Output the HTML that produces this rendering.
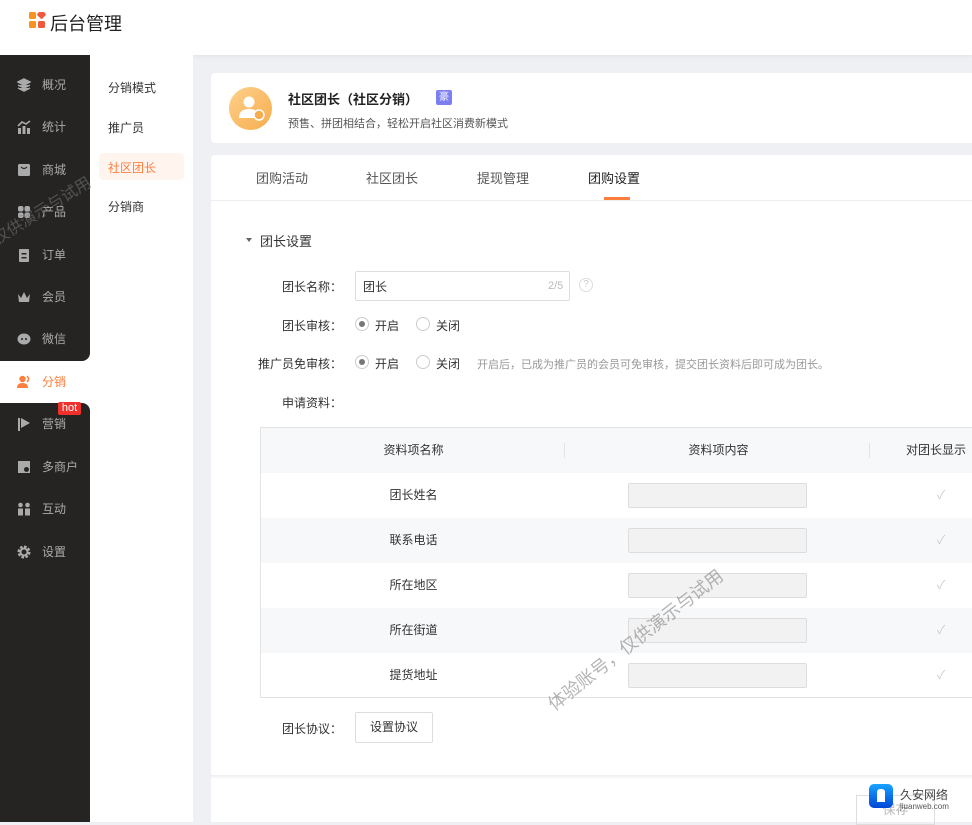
<!DOCTYPE html>
<html><head><meta charset="utf-8">
<style>
*{margin:0;padding:0;box-sizing:border-box}
body{width:972px;height:822px;overflow:hidden;background:#eef0f4;font-family:"Liberation Sans","Noto Sans CJK SC",sans-serif;font-size:12px;color:#333;position:relative}
.abs{position:absolute}
.header{left:0;top:0;width:972px;height:55px;background:#fff;box-shadow:0 1px 4px rgba(0,0,0,.06)}
.side{left:0;top:55px;width:90px;height:767px;background:#252423}
.sub{left:90px;top:55px;width:103px;height:767px;background:#fff}
.si{position:absolute;left:0;width:90px;height:20px;color:#aaa;font-size:12px;line-height:20px}
.si span{position:absolute;left:42px}
.si svg{position:absolute;left:17px;top:3px}
.mi{position:absolute;left:108px;font-size:12px;color:#333}
.card{background:#fff;border-radius:4px}
.tab{position:absolute;top:168px;font-size:13px;color:#555}
.lab{position:absolute;font-size:12px;color:#333;text-align:right;width:100px;white-space:nowrap}
.radio{position:absolute;width:14px;height:14px;border:1px solid #ccc;border-radius:50%;background:#fff}
.radio.on::after{content:"";position:absolute;left:3px;top:3px;width:6px;height:6px;border-radius:50%;background:#777}
.rt{position:absolute;font-size:12px;color:#333;white-space:nowrap}
.row{position:absolute;left:261px;width:711px;height:45px}
.row .n{position:absolute;left:0;width:305px;text-align:center;line-height:45px;font-size:12px;color:#333}
.row .in{position:absolute;left:367px;top:10px;width:179px;height:25px;background:#f2f2f2;border:1px solid #ddd;border-radius:2px}
.row .ck{position:absolute;left:670px;top:13px;color:#ccc;font-size:12px}
.wm{position:absolute;color:rgba(120,120,120,.55);font-size:18px;white-space:nowrap;transform-origin:left bottom}
</style></head><body>
<div class="abs header">
  <svg class="abs" style="left:29px;top:12px" width="17" height="17" viewBox="0 0 17 17"><rect x="0" y="0" width="7" height="7" rx="1.5" fill="#f7931e"/><rect x="9" y="-1" width="7" height="7" rx="1.5" fill="#f05a3c" transform="rotate(45 12.5 2.5)"/><rect x="0" y="9" width="7" height="7" rx="1.5" fill="#f7931e"/><rect x="9" y="9" width="7" height="7" rx="1.5" fill="#f05a3c"/></svg>
  <div class="abs" style="left:50px;top:10px;font-size:18px;color:#222">后台管理</div>
</div>
<div class="abs side"></div>
<div class="abs" style="left:0;top:361px;width:90px;height:42px;background:#fff"></div>
<div class="abs" style="left:80px;top:350px;width:10px;height:11px;background:#fff"></div>
<div class="abs" style="left:80px;top:350px;width:10px;height:11px;background:#252423;border-bottom-right-radius:8px"></div>
<div class="abs" style="left:80px;top:403px;width:10px;height:10px;background:#fff"></div>
<div class="abs" style="left:80px;top:403px;width:10px;height:10px;background:#252423;border-top-right-radius:8px"></div>
<div class="abs sub"></div>

<div class="si" style="top:75px"><svg width="14" height="14"><path d="M7 1L13 4L7 7L1 4Z M1 7L7 10L13 7 M1 10L7 13L13 10" fill="#aaa" stroke="#aaa" stroke-width="1.5"/></svg><span>概况</span></div>
<div class="si" style="top:117px"><svg width="14" height="14"><rect x="1" y="8" width="3" height="6" fill="#aaa"/><rect x="5.5" y="6" width="3" height="8" fill="#aaa"/><rect x="10" y="8" width="3" height="6" fill="#aaa"/><path d="M1 6L5 2L9 4L13 1" stroke="#aaa" stroke-width="1.6" fill="none"/></svg><span>统计</span></div>
<div class="si" style="top:160px"><svg width="14" height="14"><rect x="1" y="1" width="12" height="12" rx="1.5" fill="#aaa"/><path d="M4 4Q7 7 10 4" stroke="#252423" stroke-width="1.2" fill="none"/></svg><span>商城</span></div>
<div class="si" style="top:202px"><svg width="14" height="14"><rect x="1" y="1" width="5.5" height="5.5" rx="2" fill="#aaa"/><rect x="7.5" y="1" width="5.5" height="5.5" rx="2" fill="#aaa"/><rect x="1" y="7.5" width="5.5" height="5.5" rx="2" fill="#aaa"/><rect x="7.5" y="7.5" width="5.5" height="5.5" rx="2" fill="#aaa"/></svg><span>产品</span></div>
<div class="si" style="top:245px"><svg width="14" height="14"><rect x="2" y="1" width="10" height="13" rx="1" fill="#aaa"/><rect x="4.5" y="5" width="5" height="1.5" fill="#252423"/><rect x="4.5" y="9" width="5" height="1.5" fill="#252423"/></svg><span>订单</span></div>
<div class="si" style="top:287px"><svg width="14" height="14"><path d="M1 4L4 8L7 2L10 8L13 4L12 12H2Z" fill="#aaa"/></svg><span>会员</span></div>
<div class="si" style="top:329px"><svg width="14" height="14"><ellipse cx="7" cy="7" rx="6.5" ry="5.5" fill="#aaa"/><circle cx="5" cy="7" r="1" fill="#252423"/><circle cx="9" cy="7" r="1" fill="#252423"/></svg><span>微信</span></div>
<div class="si" style="top:372px;color:#ff7e3d"><svg width="14" height="14"><circle cx="5.5" cy="4" r="3.2" fill="#ff7e3d"/><path d="M0 13Q0 8 5.5 8Q11 8 11 13Z" fill="#ff7e3d"/><path d="M10 1Q13 4 10 7" stroke="#ff7e3d" stroke-width="1.5" fill="none"/></svg><span>分销</span></div>
<div class="abs" style="left:58px;top:402px;width:23px;height:13px;background:#f0302a;color:#fff;font-size:11px;line-height:13px;text-align:center;border-radius:2px">hot</div>
<div class="si" style="top:414px"><svg width="14" height="14"><rect x="1" y="1" width="2" height="13" fill="#aaa"/><path d="M4 1L13 6L4 11Z" fill="#aaa"/></svg><span>营销</span></div>
<div class="si" style="top:457px"><svg width="14" height="14"><rect x="1" y="1" width="12" height="12" fill="#aaa"/><circle cx="9.5" cy="9.5" r="3" fill="#252423" stroke="#aaa"/></svg><span>多商户</span></div>
<div class="si" style="top:499px"><svg width="14" height="14"><circle cx="3.5" cy="3" r="2.3" fill="#aaa"/><circle cx="10.5" cy="3" r="2.3" fill="#aaa"/><rect x="1" y="6.5" width="5" height="7" fill="#aaa"/><rect x="8" y="6.5" width="5" height="7" fill="#aaa"/></svg><span>互动</span></div>
<div class="si" style="top:542px"><svg width="14" height="14"><circle cx="7" cy="7" r="5" fill="none" stroke="#aaa" stroke-width="3" stroke-dasharray="2.5 1.4"/><circle cx="7" cy="7" r="3.5" fill="none" stroke="#aaa" stroke-width="2"/></svg><span>设置</span></div>

<div class="mi" style="top:79px">分销模式</div>
<div class="mi" style="top:119px">推广员</div>
<div class="abs" style="left:99px;top:153px;width:85px;height:27px;background:#fff4ee;border-radius:4px"></div>
<div class="mi" style="top:159px;color:#ff7e3d">社区团长</div>
<div class="mi" style="top:198px">分销商</div>

<div class="abs card" style="left:211px;top:73px;width:770px;height:70px"></div>
<div class="abs" style="left:229px;top:87px;width:43px;height:43px;border-radius:50%;background:linear-gradient(135deg,#fdd08a,#f7ad4e)"></div>
<svg class="abs" style="left:234px;top:92px" width="34" height="34"><circle cx="15" cy="10" r="5.5" fill="#fff"/><path d="M5 26Q5 17 15 17Q25 17 25 26Z" fill="#fff"/><circle cx="25" cy="23" r="5" fill="#f7ad4e" stroke="#fff" stroke-width="1.5"/></svg>
<div class="abs" style="left:288px;top:89px;font-size:13px;font-weight:bold;color:#222;white-space:nowrap">社区团长（社区分销）</div>
<div class="abs" style="left:436px;top:90px;width:16px;height:15px;background:#7b7ff0;border-radius:2px;color:#fff;font-size:10px;text-align:center;line-height:15px">豪</div>
<div class="abs" style="left:288px;top:115px;font-size:11px;color:#555">预售、拼团相结合，轻松开启社区消费新模式</div>

<div class="abs card" style="left:211px;top:155px;width:770px;height:622px"></div>
<div class="abs" style="left:211px;top:200px;width:761px;height:1px;background:#eee"></div>
<div class="tab" style="left:256px">团购活动</div>
<div class="tab" style="left:366px">社区团长</div>
<div class="tab" style="left:477px">提现管理</div>
<div class="tab" style="left:588px;color:#222">团购设置</div>
<div class="abs" style="left:604px;top:197px;width:26px;height:3px;background:#ff7e3d"></div>

<div class="abs" style="left:246px;top:238px;width:0;height:0;border-left:3.5px solid transparent;border-right:3.5px solid transparent;border-top:4px solid #666"></div>
<div class="abs" style="left:260px;top:231px;font-size:13px;color:#333">团长设置</div>

<div class="lab" style="left:242px;top:278px">团长名称：</div>
<div class="abs" style="left:355px;top:271px;width:215px;height:30px;border:1px solid #ddd;border-radius:2px"></div>
<div class="rt" style="left:363px;top:278px">团长</div>
<div class="rt" style="left:548px;top:280px;color:#bbb;font-size:11px">2/5</div>
<div class="abs" style="left:579px;top:278px;width:14px;height:14px;border:1px solid #ddd;border-radius:50%;color:#ccc;font-size:10px;text-align:center;line-height:12px">?</div>

<div class="lab" style="left:242px;top:317px">团长审核：</div>
<div class="radio on" style="left:355px;top:317px"></div><div class="rt" style="left:375px;top:317px">开启</div>
<div class="radio" style="left:416px;top:317px"></div><div class="rt" style="left:436px;top:317px">关闭</div>

<div class="lab" style="left:242px;top:355px">推广员免审核：</div>
<div class="radio on" style="left:355px;top:355px"></div><div class="rt" style="left:375px;top:355px">开启</div>
<div class="radio" style="left:416px;top:355px"></div><div class="rt" style="left:436px;top:355px">关闭</div>
<div class="rt" style="left:477px;top:356px;color:#999;font-size:11px">开启后，已成为推广员的会员可免审核，提交团长资料后即可成为团长。</div>

<div class="lab" style="left:242px;top:394px">申请资料：</div>

<div class="abs" style="left:260px;top:427px;width:720px;height:271px;border:1px solid #e3e3e3"></div>
<div class="row" style="top:428px;background:#f7f8fa"><div class="n">资料项名称</div><div class="n" style="left:305px">资料项内容</div><div class="n" style="left:610px;width:130px">对团长显示</div></div>
<div class="abs" style="left:564px;top:443px;width:1px;height:15px;background:#e3e3e3"></div>
<div class="abs" style="left:869px;top:443px;width:1px;height:15px;background:#e3e3e3"></div>
<div class="row" style="top:473px"><div class="n">团长姓名</div><div class="in"></div><div class="ck" style="left:676px">✓</div></div>
<div class="row" style="top:518px;background:#f7f8fa"><div class="n">联系电话</div><div class="in"></div><div class="ck" style="left:676px">✓</div></div>
<div class="row" style="top:563px"><div class="n">所在地区</div><div class="in"></div><div class="ck" style="left:676px">✓</div></div>
<div class="row" style="top:608px;background:#f7f8fa"><div class="n">所在街道</div><div class="in"></div><div class="ck" style="left:676px">✓</div></div>
<div class="row" style="top:653px"><div class="n">提货地址</div><div class="in"></div><div class="ck" style="left:676px">✓</div></div>

<div class="lab" style="left:242px;top:720px">团长协议：</div>
<div class="abs" style="left:355px;top:712px;width:78px;height:31px;border:1px solid #ddd;border-radius:2px;text-align:center;line-height:29px;font-size:12px">设置协议</div>

<div class="abs" style="left:211px;top:775px;width:761px;height:4px;background:linear-gradient(#eee,#fff)"></div>
<div class="abs" style="left:211px;top:779px;width:761px;height:43px;background:#fff"></div>
<div class="abs" style="left:856px;top:795px;width:79px;height:30px;border:1px solid #ddd;color:#bbb;text-align:center;line-height:28px;font-size:13px">保存</div>
<div class="abs" style="left:869px;top:784px;width:24px;height:24px;border-radius:5px;background:linear-gradient(#19a3ff,#0046d6)"></div>
<div class="abs" style="left:877px;top:789px;width:8px;height:13px;background:#fff;border-radius:3px 3px 0 0"></div>
<div class="abs" style="left:900px;top:786px;font-size:12px;color:#444">久安网络</div>
<div class="abs" style="left:900px;top:802px;font-size:8px;color:#555">jiuanweb.com</div>

<div class="wm" style="left:0;top:225px;transform:rotate(-32deg);font-size:16px">仅供演示与试用</div>
<div class="wm" style="left:558px;top:690px;transform:rotate(-38deg);font-size:18px">体验账号，仅供演示与试用</div>
</body></html>
